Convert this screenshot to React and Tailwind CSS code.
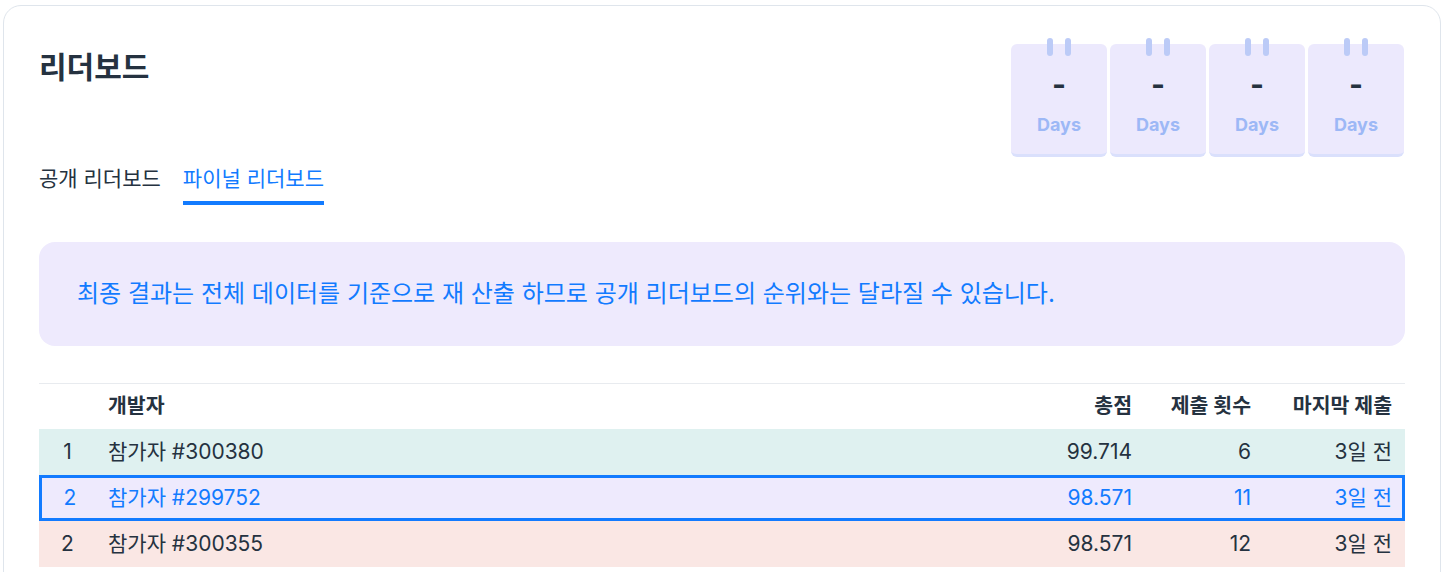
import React from "react";

const font = { fontFamily: '"Inter", "Noto Sans CJK KR", "Noto Sans", sans-serif' };

function CalBox() {
  return (
    <div className="relative w-[96px] pt-[6px]">
      <div className="absolute top-0 left-[36px] w-[6px] h-[18px] rounded-full bg-[#bccbf7]" />
      <div className="absolute top-0 left-[54px] w-[6px] h-[18px] rounded-full bg-[#bccbf7]" />
      <div className="h-[113px] rounded-[6px] bg-[#ece9fd] border-b-[3px] border-[#dae0fc] flex flex-col items-center">
        <div className="mt-[25px] text-[30px] leading-[30px] font-bold text-[#253240]">-</div>
        <div className="mt-[15px] text-[18px] leading-[22px] font-bold text-[#9db8f6]">Days</div>
      </div>
    </div>
  );
}

const rows = [
  { rank: "1", name: "참가자 #300380", score: "99.714", count: "6", last: "3일 전", bg: "bg-[#dff1f0]", me: false },
  { rank: "2", name: "참가자 #299752", score: "98.571", count: "11", last: "3일 전", bg: "bg-[#eeeafd]", me: true },
  { rank: "2", name: "참가자 #300355", score: "98.571", count: "12", last: "3일 전", bg: "bg-[#fae7e4]", me: false },
];

export default function App() {
  return (
    <div className="bg-white w-[1448px] h-[572px] overflow-hidden" style={font}>
      <div className="mt-[5px] ml-[3px] mr-[7px] h-[620px] border border-[#dfe5ec] rounded-[18px] px-[35px] pt-[32px]">
        <div className="flex justify-between items-start">
          <h1 className="mt-[11px] text-[30px] leading-[36px] font-bold text-[#253240]">리더보드</h1>
          <div className="flex gap-[3px] mr-[1px]">
            <CalBox />
            <CalBox />
            <CalBox />
            <CalBox />
          </div>
        </div>
        <div className="mt-[8px] flex gap-[22px] text-[21px] leading-[27px]">
          <div className="pb-[13px] text-[#253240]">공개 리더보드</div>
          <div className="pb-[9px] border-b-[4px] border-[#127bff] text-[#127bff]">파이널 리더보드</div>
        </div>
        <div className="mt-[37px] h-[104px] rounded-[16px] bg-[#eeeafd] flex items-center px-[38px] text-[24px] text-[#127bff]">
          최종 결과는 전체 데이터를 기준으로 재 산출 하므로 공개 리더보드의 순위와는 달라질 수 있습니다.
        </div>
        <div className="mt-[37px] border-t border-[#e8ebef]">
          <div className="flex items-center h-[45px] text-[20.5px] font-bold text-[#253240]">
            <div className="w-[57px]" />
            <div className="flex-1 pl-[12px]">개발자</div>
            <div className="w-[140px] text-right pr-[12px]">총점</div>
            <div className="w-[119px] text-right pr-[12px]">제출 횟수</div>
            <div className="w-[142px] text-right pr-[13px]">마지막 제출</div>
          </div>
          {rows.map((r, i) => (
            <div
              key={i}
              className={`flex items-center h-[46px] text-[21px] ${r.bg} ${r.me ? "border-[3px] border-[#127bff] text-[#127bff]" : "text-[#253240]"}`}
            >
              <div className={r.me ? "w-[54px] text-center pl-[2px]" : "w-[57px] text-center"}>{r.rank}</div>
              <div className="flex-1 pl-[12px]">{r.name}</div>
              <div className="w-[140px] text-right pr-[12px]">{r.score}</div>
              <div className="w-[119px] text-right pr-[12px]">{r.count}</div>
              <div className={r.me ? "w-[139px] text-right pr-[10px]" : "w-[142px] text-right pr-[13px]"}>{r.last}</div>
            </div>
          ))}
        </div>
      </div>
    </div>
  );
}
